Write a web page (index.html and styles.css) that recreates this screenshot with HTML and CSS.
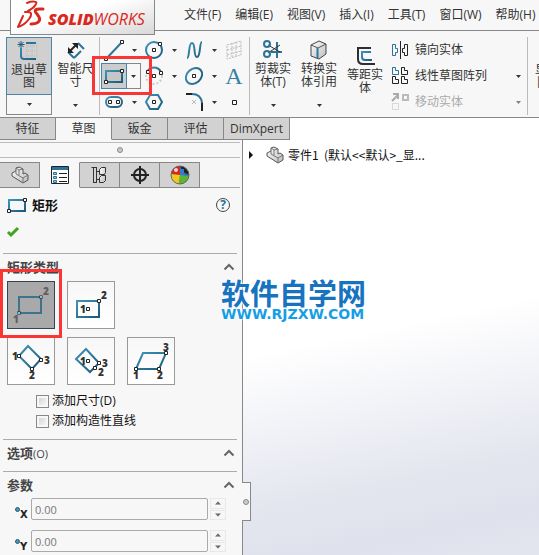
FILE: index.html
```html
<!DOCTYPE html>
<html lang="zh-CN">
<head>
<meta charset="utf-8">
<title>SOLIDWORKS</title>
<link rel="stylesheet" href="styles.css">
</head>
<body>
<svg class="defs" aria-hidden="true">
  <defs>
    <linearGradient id="blue" x1="0" y1="0" x2="1" y2="1"><stop offset="0" stop-color="#3f93b8"/><stop offset="1" stop-color="#1c5a7c"/></linearGradient>
    <linearGradient id="metal" x1="0" y1="0" x2="1" y2="1"><stop offset="0" stop-color="#fff"/><stop offset="1" stop-color="#bbb"/></linearGradient>
    <symbol id="down" viewBox="0 0 5 3"><path d="M0 0h5L2.500 3z" fill="#333"/></symbol>
    <symbol id="pt" viewBox="0 0 5 5"><path d="M.5.5h3v3h-3z" fill="#fff" stroke="#222"/></symbol>
    <symbol id="part" viewBox="0 0 18 18"><path d="M1 7l4-2V2l3-1 4 2v5l2-1 3 2v5l-5 3L1 10z" fill="url(#metal)" stroke="#555" stroke-linejoin="round"/><path d="M5 2l3 2 4-1M8 4v5M5 5v3l7 4 5-3M12 12v5" fill="none" stroke="#777"/></symbol>
    <symbol id="chev" viewBox="0 0 12 8"><path d="M1.500 6.500L6 2l4.500 4.500" fill="none" stroke="#666" stroke-width="2"/></symbol>
  </defs>
</svg>

<header class="menubar">
  <div class="brand">
    <svg width="28" height="28" viewBox="0 0 28 28" fill="none" stroke="#d9281e" stroke-linecap="round"><path d="M11 3c5-2 11-2 9 1-1 2-4 5-8 7" stroke-width="2"/><path d="M9 12h3c4 0 4 3 1 7-3 4-7 7-11 8l5-11" stroke-width="2" stroke-linejoin="round"/><path d="M27 9h-4c-4 0-5 2-2 5l2 3c2 4-1 7-8 7" stroke-width="3"/></svg>
    <span class="wordmark"><b>SOLID</b>WORKS</span>
  </div>
  <nav class="menus">
    <button>文件(F)</button><button>编辑(E)</button><button>视图(V)</button><button>插入(I)</button><button>工具(T)</button><button>窗口(W)</button><button>帮助(H)</button>
  </nav>
</header>

<section class="ribbon">
  <div class="big exit">
    <button class="main"><svg width="24" height="22" viewBox="0 0 24 22" fill="none"><path d="M9 6h12M9 11h12M9 16h12M10 3v15M15 3v15M20 3v15" stroke="#bbb" stroke-dasharray="1 1"/><path d="M9 3h10M4 8v8q0 3 3 3h12" stroke="url(#blue)" stroke-width="2"/><path d="M9 3h10" stroke="#2d7396" stroke-width="2"/><path d="M4 1v7M.5 4.500h7M1.500 2l5 5M6.500 2l-5 5" stroke="#205f80" stroke-width="1"/></svg><span>退出草<br>图</span></button>
    <button class="more" aria-label="更多"><svg width="5" height="3"><use href="#down"/></svg></button>
  </div>
  <div class="big smart">
    <button class="main"><svg width="20" height="22" viewBox="0 0 20 22" fill="none"><path d="M12 4l6 6M2 13l6 6M15 12l-7 7" stroke="#2d7396" stroke-width="2"/><path d="M4 12l7-7" stroke="#222" stroke-width="2"/><path d="M6 4h6v6zM2 8v6h6z" fill="#222"/></svg><span>智能尺<br>寸</span></button>
    <button class="more" aria-label="更多"><svg width="5" height="3"><use href="#down"/></svg></button>
  </div>
  <div class="tools">
    <div class="tool"><button aria-label="直线"><svg width="26" height="26"><path d="M5 22L21 5" stroke="url(#blue)" stroke-width="2"/><use href="#pt" x="3" y="20" width="5" height="5"/><use href="#pt" x="19" y="3" width="5" height="5"/></svg></button><button class="more" aria-label="更多"><svg width="5" height="3"><use href="#down"/></svg></button></div>
    <div class="tool"><button aria-label="圆"><svg width="26" height="26"><circle cx="13" cy="13" r="8" fill="none" stroke="url(#blue)" stroke-width="2"/><use href="#pt" x="11" y="11" width="5" height="5"/><use href="#pt" x="17" y="5" width="5" height="5"/></svg></button><button class="more" aria-label="更多"><svg width="5" height="3"><use href="#down"/></svg></button></div>
    <div class="tool"><button aria-label="样条曲线"><svg width="26" height="26"><path d="M6 21C9 21 7 6 11 6s1 14 5 14 2-15 5-15" fill="none" stroke="url(#blue)" stroke-width="2"/></svg></button><button class="more" aria-label="更多"><svg width="5" height="3"><use href="#down"/></svg></button></div>
    <div class="tool"><button aria-label="基准面"><svg width="26" height="26"><path d="M6 8l14-4v14L6 22zM11 6v14M15 5v14M6 13l14-4M6 18l14-4" fill="none" stroke="#bbb" stroke-dasharray="2 1"/></svg></button></div>

    <div class="tool selected"><button aria-label="边角矩形"><svg width="24" height="24"><path d="M4 7h16v11H4z" fill="#c6c6c6" stroke="url(#blue)" stroke-width="2"/><use href="#pt" x="2" y="16" width="5" height="5"/><use href="#pt" x="18" y="5" width="5" height="5"/></svg></button><button class="more" aria-label="更多"><svg width="5" height="3"><use href="#down"/></svg></button><i class="mark"></i></div>
    <div class="tool"><button aria-label="圆弧"><svg width="26" height="26"><circle cx="13" cy="13" r="8" fill="none" stroke="#ccc" stroke-width="2" stroke-dasharray="2 2"/><path d="M6 9c3-6 11-6 14 0" fill="none" stroke="url(#blue)" stroke-width="2"/><use href="#pt" x="5" y="7" width="5" height="5"/><use href="#pt" x="11" y="11" width="5" height="5"/><use href="#pt" x="18" y="8" width="5" height="5"/></svg></button><button class="more" aria-label="更多"><svg width="5" height="3"><use href="#down"/></svg></button></div>
    <div class="tool"><button aria-label="椭圆"><svg width="26" height="26"><ellipse cx="13" cy="13" rx="9" ry="7" transform="rotate(-42 13 13)" fill="none" stroke="url(#blue)" stroke-width="2"/><use href="#pt" x="11" y="11" width="5" height="5"/></svg></button><button class="more" aria-label="更多"><svg width="5" height="3"><use href="#down"/></svg></button></div>
    <div class="tool"><button class="glyph">A</button></div>

    <div class="tool"><button aria-label="直槽口"><svg width="26" height="26"><rect x="5" y="8" width="16" height="10" rx="5" fill="none" stroke="url(#blue)" stroke-width="2"/><use href="#pt" x="7" y="11" width="5" height="5"/><use href="#pt" x="15" y="11" width="5" height="5"/></svg></button><button class="more" aria-label="更多"><svg width="5" height="3"><use href="#down"/></svg></button></div>
    <div class="tool"><button aria-label="多边形"><svg width="26" height="26"><path d="M9 6h8l4 7-4 7H9l-4-7z" fill="none" stroke="url(#blue)" stroke-width="2"/><use href="#pt" x="11" y="11" width="5" height="5"/></svg></button></div>
    <div class="tool"><button aria-label="圆角"><svg width="26" height="26" fill="none"><path d="M5 5h6" stroke="#222" stroke-width="2"/><path d="M11 5q9 0 10 9" stroke="#2d7396" stroke-width="2"/><path d="M21 14v8" stroke="#222" stroke-width="2"/><path d="M11 11l4 4M15 11l-4 4" stroke="#bbb"/></svg></button><button class="more" aria-label="更多"><svg width="5" height="3"><use href="#down"/></svg></button></div>
    <div class="tool"><button aria-label="点"><svg width="26" height="26"><path d="M11.500 11.500h4v4h-4z" fill="#fff" stroke="#222"/></svg></button></div>
  </div>
  <div class="big edit">
    <button class="main"><svg width="22" height="22" viewBox="0 0 22 22" fill="none"><path d="M9 13h11M15 3v16" stroke="#2d7396" stroke-width="2"/><path d="M6 6l12 7M6 14l12-8" stroke="#333"/><circle cx="5" cy="5" r="3" stroke="#2d7396" stroke-width="2"/><circle cx="5" cy="15" r="3" stroke="#2d7396" stroke-width="2"/></svg><span>剪裁实<br>体(T)</span></button>
    <button class="more" aria-label="更多"><svg width="5" height="3"><use href="#down"/></svg></button>
  </div>
  <div class="big edit">
    <button class="main"><svg width="22" height="22" viewBox="0 0 22 22"><path d="M3 6l8-4 7 3v10l-7 5-8-3z" fill="url(#metal)" stroke="#444" stroke-linejoin="round"/><path d="M3 6l7 3 8-4" fill="none" stroke="#555"/><path d="M9.500 9v10" fill="none" stroke="#2b7ba2" stroke-width="2"/></svg><span>转换实<br>体引用</span></button>
    <button class="more" aria-label="更多"><svg width="5" height="3"><use href="#down"/></svg></button>
  </div>
  <div class="big edit low">
    <button class="main"><svg width="22" height="22" viewBox="0 0 22 22" fill="none"><path d="M17 3H4v11q0 5 5 5h12" stroke="#2b2f33" stroke-width="2"/><path d="M17 7H8v5q0 3 3 3h7" stroke="url(#blue)" stroke-width="2"/></svg><span>等距实<br>体</span></button>
  </div>
  <div class="list">
    <button><svg width="18" height="18" fill="none"><path d="M1.500 3.500h3v4h2v4h-2v3h-3z" stroke="#2d7396"/><path d="M16.500 3.500h-3v4h-2v4h2v3h3z" stroke="#222"/><path d="M9.500 0v18" stroke="#222"/></svg><span>镜向实体</span></button>
    <button><svg width="18" height="18" fill="none"><path d="M1.500.5h3v3h3v4h-6z" stroke="#2d7396"/><path d="M10.500.5h3v3h3v4h-6zM1.500 9.500h3v3h3v4h-6zM10.500 9.500h3v3h3v4h-6z" stroke="#222"/></svg><span>线性草图阵列</span><svg class="end" width="5" height="3"><use href="#down"/></svg></button>
    <button disabled><svg width="18" height="18" fill="none"><path d="M1 8l6-6M2 1h5v5" stroke="#aaa" stroke-width="2"/><path d="M12 2h5v5h-5z" stroke="#bbb" stroke-width="2"/><path d="M1.500 10.500h6v6h-6z" stroke="#bbb" stroke-dasharray="1 1"/></svg><span>移动实体</span><svg class="end" width="5" height="3"><use href="#down"/></svg></button>
  </div>
  <div class="big cut"><button class="main"><span>显示/删<br>除几何</span></button></div>
</section>

<main class="work">
  <nav class="tabs"><button>特征</button><button class="on">草图</button><button>钣金</button><button>评估</button><button class="wide">DimXpert</button></nav>
  <div class="split">
    <aside class="panel">
      <div class="grip"><i class="dot"></i></div>
      <nav class="ptabs">
        <button aria-label="设计树"><svg width="18" height="18"><use href="#part"/></svg></button>
        <button class="on" aria-label="属性"><svg width="18" height="18" fill="none"><path d="M.5.5h17v17H.5z" fill="#fff" stroke="#222"/><path d="M1 2.500h16" stroke="#2d7396" stroke-width="3"/><path d="M2.500 6.500h3v2h-3zM2.500 10.500h3v2h-3zM2.500 14.500h3v2h-3z" fill="#9cc" stroke="#2d7396"/><path d="M8 7.500h8M8 11.500h8M8 15.500h8" stroke="#222"/></svg></button>
        <button aria-label="配置"><svg width="18" height="18" fill="none" stroke="#333"><path d="M2.500 1v16M5.500 1v16M.5 1.500h5M2.500 16.500h3M5.500 5.500h3M5.500 13.500h3"/><path d="M8.500 3.500l2-2h4v5l-1 2h-5zM8.500 11.500l2-2h4v5l-2 2h-4z" fill="url(#metal)"/></svg></button>
        <button aria-label="尺寸专家"><svg width="18" height="18" fill="none" stroke="#222" stroke-width="2"><circle cx="9" cy="9" r="6"/><path d="M9 0v18M0 9h18"/></svg></button>
        <button aria-label="外观"><svg width="20" height="20"><circle cx="10" cy="10" r="9" fill="#2b73c8"/><path d="M10 10L1 9a9 9 0 0 1 9-8z" fill="#d8271f"/><path d="M1 9l9 1-1 9a9 9 0 0 1-8-10z" fill="#f2c71c"/><path d="M10 10l9 1a9 9 0 0 1-10 8z" fill="#5bb531"/><path d="M10 1a9 9 0 0 1 9 9l-6-3z" fill="#222"/><path d="M10 4h4v6h-4z" fill="#3979d5"/><circle cx="6" cy="5" r="2" fill="#fff" opacity=".8"/><circle cx="10" cy="10" r="9" fill="none" stroke="#666"/></svg></button>
      </nav>
      <div class="title"><svg width="21" height="17" viewBox="0 0 21 17"><path d="M2 3h16v11H2z" fill="none" stroke="url(#blue)" stroke-width="2"/><use href="#pt" x="0" y="12" width="5" height="5"/><use href="#pt" x="16" y="1" width="5" height="5"/></svg><h1>矩形</h1><button class="help" aria-label="帮助">?</button></div>
      <button class="ok" aria-label="确定"><svg width="14" height="12"><path d="M2 6l3 3 7-7" fill="none" stroke="#3fa31c" stroke-width="3"/></svg></button>

      <section class="group types">
        <h2>矩形类型<svg width="12" height="8"><use href="#chev"/></svg></h2>
        <div class="choices">
          <button class="pick" aria-label="边角矩形"><svg width="46" height="46"><path d="M11 15h22v16H11z" fill="none" stroke="#3c748f" stroke-width="2"/><g class="pts"><use href="#pt" x="9" y="29" width="5" height="5"/><use href="#pt" x="31" y="13" width="5" height="5"/></g><text x="5" y="41">1</text><text x="35" y="13">2</text></svg><i class="mark"></i></button>
          <button aria-label="中心矩形"><svg width="46" height="46"><path d="M9 19h22v16H9z" fill="none" stroke="url(#blue)" stroke-width="2"/><use href="#pt" x="18" y="25" width="5" height="5"/><use href="#pt" x="29" y="17" width="5" height="5"/><text x="12" y="31">1</text><text x="33" y="17">2</text></svg></button>
          <button class="newrow" aria-label="3点边角矩形"><svg width="46" height="46"><path d="M11 18l9-10 13 13-9 10z" fill="none" stroke="url(#blue)" stroke-width="2"/><use href="#pt" x="9" y="16" width="5" height="5"/><use href="#pt" x="31" y="20" width="5" height="5"/><use href="#pt" x="22" y="29" width="5" height="5"/><text x="4" y="22">1</text><text x="36" y="26">3</text><text x="21" y="41">2</text></svg></button>
          <button aria-label="3点中心矩形"><svg width="46" height="46"><path d="M8 21l10-10 13 14-9 9z" fill="none" stroke="url(#blue)" stroke-width="2"/><use href="#pt" x="18" y="21" width="5" height="5"/><use href="#pt" x="29" y="23" width="5" height="5"/><use href="#pt" x="25" y="28" width="5" height="5"/><text x="12" y="27">1</text><text x="34" y="29">3</text><text x="30" y="38">2</text></svg></button>
          <button aria-label="平行四边形"><svg width="46" height="46"><path d="M8 31l7-16h23l-7 16z" fill="none" stroke="url(#blue)" stroke-width="2"/><use href="#pt" x="6" y="29" width="5" height="5"/><use href="#pt" x="29" y="29" width="5" height="5"/><use href="#pt" x="36" y="13" width="5" height="5"/><text x="5" y="41">1</text><text x="29" y="41">2</text><text x="35" y="13">3</text></svg></button>
        </div>
        <label class="check"><input type="checkbox">添加尺寸(D)</label>
        <label class="check"><input type="checkbox">添加构造性直线</label>
      </section>
      <section class="group options"><h2><span>选项<small>(O)</small></span><svg width="12" height="8"><use href="#chev"/></svg></h2></section>
      <section class="group params">
        <h2>参数<svg width="12" height="8"><use href="#chev"/></svg></h2>
        <div class="param"><label for="px"><i></i>X</label><input id="px" type="text" value="0.00"><span class="spin"><button aria-label="增加"><svg class="flip" width="6" height="4" viewBox="0 0 5 3"><use href="#down"/></svg></button><button aria-label="减少"><svg width="6" height="4" viewBox="0 0 5 3"><use href="#down"/></svg></button></span></div>
        <div class="param"><label for="py"><i></i>Y</label><input id="py" type="text" value="0.00"><span class="spin"><button aria-label="增加"><svg class="flip" width="6" height="4" viewBox="0 0 5 3"><use href="#down"/></svg></button><button aria-label="减少"><svg width="6" height="4" viewBox="0 0 5 3"><use href="#down"/></svg></button></span></div>
      </section>
      <button class="handle" aria-label="折叠"><i class="dot"></i></button>
    </aside>
    <section class="view">
      <div class="tree"><svg width="4" height="8"><path d="M0 0l4 4-4 4z" fill="#111"/></svg><svg width="18" height="18"><use href="#part"/></svg><span>零件1&nbsp; (默认&lt;&lt;默认&gt;_显...</span></div>
    </section>
  </div>
</main>
<div class="watermark"><strong>软件自学网</strong><span>WWW.RJZXW.COM</span></div>
</body>
</html>
```

FILE: styles.css
```css
* { box-sizing: border-box; }
body {
  margin: 0;
  height: 100vh;
  overflow: hidden;
  display: flex;
  flex-direction: column;
  position: relative;
  font: 12px/16px "Open Sans", "Noto Sans CJK SC", sans-serif;
  color: #333;
  background: #f7f7f7;
}
.defs { position: absolute; width: 0; height: 0; }
button {
  font: inherit;
  color: inherit;
  background: none;
  border: 0;
  padding: 0;
  margin: 0;
}
svg { display: block; flex: none; overflow: visible; }

/* menu bar */
.menubar {
  display: flex;
  height: 31px;
  flex: none;
  padding-left: 10px;
  border-bottom: 1px solid #888;
}
.brand {
  display: flex;
  align-items: center;
  gap: 4px;
  width: 145px;
  height: 35px;
  flex: none;
  padding: 0 0 6px 5px;
  border: 1px solid #888;
  border-top: 0;
  background: linear-gradient(165deg, #fff 40%, #d8d8d8);
  z-index: 1;
}
.wordmark {
  font: italic 400 16px/20px "Open Sans", sans-serif;
  color: #d9281e;
  padding-top: 10px;
}
.wordmark b { font-weight: 800; }
.menus {
  display: flex;
  align-items: center;
  gap: 14px;
  padding-left: 29px;
  white-space: nowrap;
}

/* ribbon */
.ribbon {
  display: flex;
  flex: none;
  padding: 6px 0 2px 6px;
  border-bottom: 1px solid #888;
  overflow: hidden;
}
.big {
  display: flex;
  flex-direction: column;
  width: 46px;
  height: 78px;
  flex: none;
  line-height: 13px;
}
.big .main {
  display: flex;
  flex-direction: column;
  align-items: center;
  gap: 1px;
  height: 58px;
  padding-top: 2px;
  white-space: nowrap;
}
.more {
  display: flex;
  align-items: center;
  justify-content: center;
  width: 14px;
}
.big .more { width: auto; height: 20px; }
.exit .main { background: #d0d0d0; border: 1px solid #4a84a6; }
.exit .more { border: 1px solid #888; border-top: 0; }
.smart { width: 47px; }
.tools {
  display: grid;
  grid-template-columns: 40px 40px 40px 28px;
  grid-auto-rows: 26px;
  padding-left: 1px;
  border-left: 1px solid #bbb;
  border-right: 1px solid #bbb;
}
.tool { display: flex; position: relative; }
.selected button { background: #ccc; border: 1px solid #4a84a6; }
.selected .more { background: #f7f7f7; border-color: #888; border-left: 0; }
.mark {
  position: absolute;
  inset: -7px -11px -6px -9px;
  border: 3px solid #fb3434;
  z-index: 2;
}
.glyph {
  width: 26px;
  font: 24px/26px "Liberation Serif", serif;
  color: #3a80a2;
}
.edit { width: 46px; }
.low { padding-top: 6px; }
.list { flex: 1; min-width: 136px; padding: 0 6px 0 2px; }
.list button {
  display: flex;
  align-items: center;
  gap: 6px;
  width: 100%;
  height: 26px;
  padding-left: 1px;
}
.list button:disabled { color: #aaa; }
.list button:disabled .end { opacity: .6; }
.list .end { margin-left: auto; }
.cut {
  width: 12px;
  padding: 24px 0 0 7px;
  border-left: 1px solid #bbb;
}
.cut .main { align-items: flex-start; }

/* command tabs */
.work {
  flex: 1;
  display: flex;
  flex-direction: column;
  background: linear-gradient(168deg, #fff 52%, #e4e6ef 80%, #dfe2ec 90%, #e3e6ef);
}
.tabs { display: flex; height: 22px; flex: none; }
.tabs button {
  width: 56px;
  background: #d2d2d2;
  border: 1px solid #888;
  border-width: 0 1px 1px 0;
}
.tabs .on { background: #f7f7f7; border-bottom-color: #f7f7f7; }
.tabs .wide { width: 66px; }
.split { display: flex; flex: 1; }

/* property panel */
.panel {
  position: relative;
  width: 243px;
  flex: none;
  padding-top: 2px;
  background: #f7f7f7;
  border-right: 1px solid #888;
}
.grip {
  display: flex;
  align-items: center;
  justify-content: center;
  height: 16px;
  margin-right: 2px;
  border: 1px solid #bbb;
  border-width: 1px 0;
}
.dot {
  width: 6px;
  height: 6px;
  border: 1px solid #888;
  border-radius: 50%;
  background: #ccc;
}
.ptabs {
  display: flex;
  height: 26px;
  margin: 4px 2px 0 0;
  background: linear-gradient(#aaa, #aaa) bottom / 100% 1px no-repeat;
}
.ptabs button {
  display: flex;
  align-items: center;
  justify-content: center;
  width: 40px;
  background: #d2d2d2;
  border: 1px solid #888;
  border-left: 0;
}
.ptabs .on { background: #f7f7f7; border-top-color: #f7f7f7; border-bottom-color: #f7f7f7; }
.title { display: flex; align-items: center; gap: 4px; height: 34px; padding: 0 12px 0 7px; }
h1 { margin: 0; font-size: 13px; color: #111; }
.help {
  width: 14px;
  height: 14px;
  margin-left: auto;
  border: 1px solid #444;
  border-radius: 50%;
  font-weight: bold;
  line-height: 12px;
  color: #23749c;
}
.ok { display: block; height: 12px; margin: 4px 0 0 6px; }
.group { margin: 0 5px 0 3px; border-top: 1px solid #aaa; }
.types { margin-top: 15px; }
h2 {
  display: flex;
  align-items: center;
  justify-content: space-between;
  height: 26px;
  margin: 0;
  padding: 0 2px 0 4px;
  font-size: 13px;
  color: #444;
}
h2 small { font-size: 11px; font-weight: normal; }
.choices {
  display: grid;
  grid-template-columns: repeat(3, 48px);
  gap: 8px 12px;
  padding: 1px 0 0 4px;
}
.choices button {
  position: relative;
  height: 48px;
  border: 1px solid #999;
  background: linear-gradient(#f7f7f7, #fff);
}
.choices .pick { background: #a9a9a9; border-color: #345; }
.choices .newrow { grid-column: 1; }
.choices .mark { inset: -13px -8px -10px -8px; }
.choices text { font: 800 10px "Open Sans", sans-serif; fill: #333; }
.choices .pick text { fill: #606060; }
.pts { opacity: .5; }
.check {
  display: flex;
  align-items: center;
  gap: 3px;
  height: 20px;
  margin-left: 33px;
  color: #111;
}
.choices + .check { margin-top: 6px; }
.check input {
  appearance: none;
  width: 13px;
  height: 13px;
  margin: 0;
  border: 1px solid #888;
  background: linear-gradient(135deg, #ccc, #fff);
  box-shadow: inset 0 0 0 2px #f7f7f7;
}
.options { margin-top: 8px; padding-bottom: 5px; }
.param {
  display: flex;
  height: 22px;
  margin-bottom: 10px;
  padding: 0 11px 0 12px;
}
.param label {
  display: flex;
  width: 16px;
  padding-top: 9px;
  font: bold 10px/16px "DejaVu Sans", sans-serif;
  color: #222;
}
.param label i {
  width: 5px;
  height: 5px;
  flex: none;
  border-radius: 50%;
  border: 1px solid #245b76;
  background: #4399bc;
}
.param input {
  flex: 1;
  min-width: 0;
  margin-right: 2px;
  padding: 0 3px;
  border: 1px solid #aaa;
  border-radius: 2px;
  background: #f7f7f7;
  font: 11px "Open Sans", sans-serif;
  color: #777;
}
.spin { display: grid; width: 16px; gap: 1px; }
.spin button { display: grid; place-items: center; border: 1px solid #e3e3e3; opacity: .7; }
.flip { transform: rotate(180deg); }
.handle {
  position: absolute;
  left: 242px;
  top: 342px;
  width: 9px;
  height: 39px;
  display: grid;
  place-items: center;
  border: 1px solid #888;
  border-left: 0;
  background: #f7f7f7;
}

/* graphics area */
.view { flex: 1; min-width: 0; padding: 6px 0 0 6px; }
.tree {
  display: flex;
  align-items: center;
  font-family: "Noto Sans CJK SC", sans-serif;
  color: #111;
  white-space: nowrap;
}
.tree svg + svg { margin: 0 4px 0 13px; }

.watermark {
  position: absolute;
  left: 221px;
  top: 276px;
  display: flex;
  flex-direction: column;
  color: #1873bf;
  text-shadow: 0 0 2px #fff, 0 0 2px #fff, 0 0 3px #fff;
}
.watermark strong { font: bold 29px/32px "Noto Sans CJK SC", sans-serif; }
.watermark span { font: bold 14px/12px "DejaVu Sans", sans-serif; color: #169ee5; }
```
